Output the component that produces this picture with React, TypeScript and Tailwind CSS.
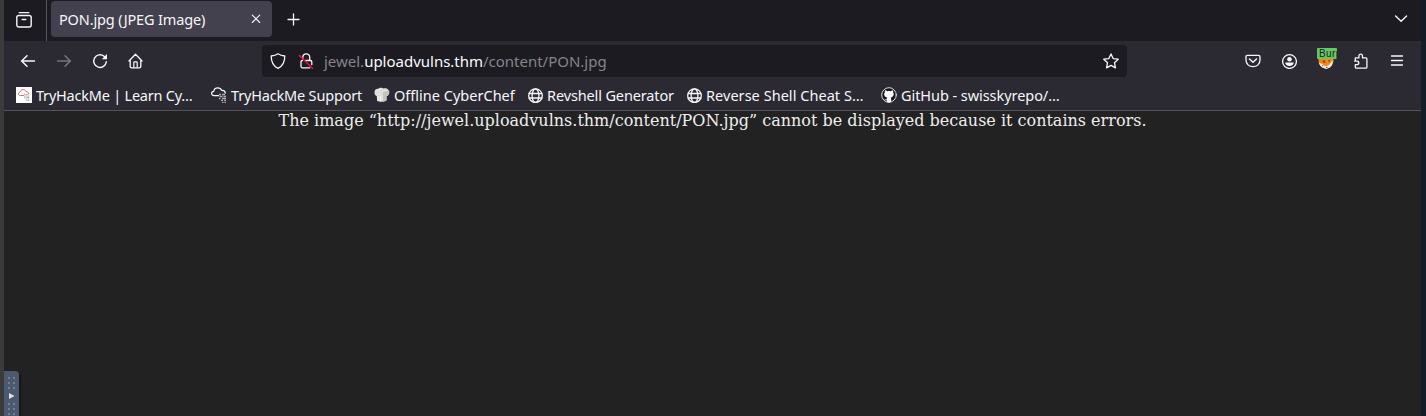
import type { ReactNode } from "react";

function Icon({ children, className = "size-4" }: { children: ReactNode; className?: string }) {
  return (
    <svg
      viewBox="0 0 16 16"
      className={`shrink-0 ${className}`}
      fill="none"
      stroke="currentColor"
      strokeWidth="1.3"
      strokeLinecap="round"
      strokeLinejoin="round"
      aria-hidden="true"
    >
      {children}
    </svg>
  );
}

function GlobeIcon() {
  return (
    <Icon>
      <circle cx="8.5" cy="8.7" r="6.8" />
      <ellipse cx="8.5" cy="8.7" rx="3.4" ry="6.8" />
      <path d="M2.2 6.5h12.6M2.2 11h12.6" />
    </Icon>
  );
}

function CloudIcon({ digits, className = "size-4" }: { digits: string; className?: string }) {
  return (
    <Icon className={className}>
      <path
        strokeWidth="1.2"
        d="M7.5 8.7H3.1C1.6 8.7.6 7.7.6 6.500s.9-2 2.100-2.100C3 2.200 4.700.8 6.800.8c1.800 0 3.200 1 3.800 2.500 1.900-.1 3.600 1 3.700 2.800"
      />
      <path
        stroke={digits}
        strokeWidth="1.3"
        strokeLinecap="butt"
        d="M8 7.500h2m1 0h3M8.500 9.500h3m1 0h2.500M8 11.500h1.500m1.500 0h4M10 13.400h2m1 0h2M11 15.300h1.500m1 0H15"
      />
    </Icon>
  );
}

function ChefHat() {
  return (
    <Icon>
      <path
        fill="#dededb"
        stroke="none"
        d="M2.800 9.200C1 8.600.3 7 .5 5 .8 2.800 2.200 1.600 4 1.900 5.200.6 8.200.3 9.500 1.400c2-.7 4.200 0 4.700 1.400 1.500 1 1.700 4 0 5.400-.5.600-1.100.8-1.700.9v4.400c-2.400 1.500-6.800 1.700-9.300.6z"
      />
      <path fill="#c4c4c0" stroke="none" d="M9 5l5.500-1.500c1 2 .3 4.500-2 5.600v4.400L9 14.700z" />
      <path stroke="#f7f7f5" strokeWidth="1" d="M4 2.800L6 2M4 9.500v4m2.500-4v4.500" />
    </Icon>
  );
}

function GitHubIcon() {
  return (
    <Icon>
      <circle cx="8" cy="8" r="7.3" fill="#17181b" strokeWidth="1" stroke="#dadadd" />
      <path
        fill="#fbfbfe"
        stroke="none"
        d="M4 3.300c.9 0 1.700.4 2.300.9 1.100-.3 2.300-.3 3.400 0 .7-.5 1.400-.9 2.300-.9.3.8.3 1.500.1 2 1.300 2 .5 4.700-2.400 5.200.4.500.5 1 .5 1.600V15c-1.300.5-3 .5-4.400 0v-1.700c-1.500.3-2-.6-2.600-1.500 1 0 1.200 1 2.400.8 0-.9.1-1.500.6-2.100C3.400 10.100 2.400 7.500 3.900 5.300c-.2-.6-.2-1.300.1-2z"
      />
    </Icon>
  );
}

const bookmarks = [
  {
    label: "TryHackMe | Learn Cy…",
    width: "w-[195px]",
    text: "tracking-[-0.22px]",
    icon: (
      <span className="flex size-4 shrink-0 items-center justify-center bg-white text-[#d65a60]">
        <CloudIcon digits="#a5a5a8" className="size-3" />
      </span>
    ),
  },
  { label: "TryHackMe Support", width: "w-[163px]", text: "tracking-[-0.18px]", icon: <CloudIcon digits="#aaaaaf" /> },
  { label: "Offline CyberChef", width: "w-[153px]", text: "tracking-[0.01px]", icon: <ChefHat /> },
  { label: "Revshell Generator", width: "w-[159px]", text: "tracking-[-0.13px]", icon: <GlobeIcon /> },
  { label: "Reverse Shell Cheat S…", width: "w-[195px]", text: "tracking-[0.04px]", icon: <GlobeIcon /> },
  { label: "GitHub - swisskyrepo/…", width: "w-[190px]", text: "tracking-[-0.06px]", icon: <GitHubIcon /> },
];

function TabStrip() {
  return (
    <div className="flex h-[41px] shrink-0 items-start bg-[#1c1b22]">
      <div className="flex h-[41px] w-[43px] items-center border-r border-[#56555e] pb-0.5 pl-3">
        <Icon>
          <path d="M3.2.7h9.6" strokeWidth="1.3" />
          <rect x=".8" y="3.5" width="14.4" height="11.5" rx="2" strokeWidth="1.4" />
          <path d="M6.3 7.500h3.400" strokeWidth="1.6" />
        </Icon>
      </div>
      <div className="mt-px ml-1 flex h-9 w-[221px] items-center justify-between rounded bg-[#42414d] pr-2 pl-2">
        <span className="pt-px text-[14.5px] tracking-[-0.15px]">PON.jpg (JPEG Image)</span>
        <Icon>
          <path d="M4.300 4.100l7.400 7.400M11.700 4.100l-7.400 7.400" strokeWidth="1.1" />
        </Icon>
      </div>
      <button className="mt-3 ml-3.5" aria-label="New tab">
        <Icon>
          <path d="M7.500 2v11M2 7.500h11" />
        </Icon>
      </button>
      <button className="mt-2.5 mr-3 ml-auto" aria-label="List all tabs">
        <Icon>
          <path d="M2.600 6l5.500 5.300L13.600 6" strokeWidth="1.4" />
        </Icon>
      </button>
    </div>
  );
}

function AddressBar() {
  return (
    <div className="ml-[118px] flex h-8 w-[865px] items-center rounded bg-[#1c1b22] pr-2 pl-2">
      <Icon>
        <path d="M8 .8c2 1.500 4.200 2 6.800 2.200 0 6-1.600 10-6.800 12.300C2.800 13 1.200 9 1.200 3 3.800 2.800 6 2.300 8 .8z" />
      </Icon>
      <Icon className="ml-3 size-4">
        <path d="M4.800 6V4.300C4.800 2.200 6.200.8 8.200.8s3.500 1.400 3.500 3.500V7" />
        <path d="M7.500 7.500h5c.8 0 1.300.5 1.300 1.300v2.700M4.500 7.500c-.9 0-1.500.5-1.500 1.300v4.700c0 .8.5 1.300 1.300 1.300h7.500" />
        <path d="M1.500 2.600l13 12.600" stroke="#f20b45" strokeWidth="1.5" />
      </Icon>
      <span className="ml-2.5 text-[15px] tracking-[-0.01px] text-[#85848a]">
        jewel.<span className="text-[#fbfbfe]">uploadvulns.thm</span>/content/PON.jpg
      </span>
      <Icon className="ml-auto size-4">
        <path d="M8 .9l2.150 4.700 5.100.6-3.800 3.500 1 5.200L8 12.400l-4.450 2.500 1-5.200L.75 6.200l5.100-.6z" />
      </Icon>
    </div>
  );
}

function ProxyFox() {
  return (
    <div className="relative mb-1 ml-5 h-[22px] w-5">
      <svg viewBox="0 0 16 16" className="absolute top-[5px] left-px size-4" aria-hidden="true">
        <path d="M.5 4L3 3h10l2.500 2c.5 4-1 7.500-3.500 9.500L8 16l-4-1.500C1 12 0 8 .5 4z" fill="#f08a13" />
        <path d="M1 9.500l3 1.500 3 2 4-1 3.800-5c0 4-1 6-3 7.500L8 16l-4.500-2C2 12.500 1 11 1 9.500z" fill="#e8e9eb" />
        <path d="M4.500 7.500h2l1 2.500-2-.5zM10 7.500l2-.5-1 2.500z" fill="#7e3710" />
        <path d="M3.500 12l2 .5-1 1zM8 14h1.500v1H8z" fill="#727781" />
        <path d="M5.500 11.500l6-1.500-3 3.500z" fill="#f58b0d" />
      </svg>
      <span className="absolute top-0 left-0 h-[11px] w-5 overflow-hidden rounded-[1px] bg-[#66c665] pl-[2px] font-['Liberation_Sans',sans-serif] text-[10px] leading-[11px] tracking-[0.4px] text-[#152b17]">
        Burp
      </span>
    </div>
  );
}

function NavBar() {
  return (
    <div className="flex h-10 items-center pl-4">
      <Icon>
        <path d="M1.500 8H14.500M7 2.800L1.700 8 7 13.200" strokeWidth="1.5" />
      </Icon>
      <Icon className="ml-5 size-4 text-[#76757c]">
        <path d="M1.500 8H14.500M9 2.800L14.300 8 9 13.200" strokeWidth="1.5" />
      </Icon>
      <Icon className="ml-5 size-4">
        <path d="M14.300 8.800A6.300 6.300 0 1 1 12 3.200L13.400 4.500" strokeWidth="1.4" />
        <path d="M15 1v5.200H9.800z" fill="currentColor" stroke="none" />
      </Icon>
      <Icon className="ml-5 size-4">
        <path d="M1 8L7.500 1.200 14 8M2.200 7v6.400c0 .9.500 1.400 1.400 1.400h7.800c.9 0 1.400-.5 1.400-1.400V7" />
        <path d="M5.800 14.500V9.700c0-.5.300-.8.800-.8h1.800c.5 0 .8.300.8.800v4.800" strokeWidth="1.2" />
      </Icon>
      <AddressBar />
      <div className="ml-auto flex items-center pr-4">
        <Icon>
          <path d="M2.300 2.400h11.400c.8 0 1.300.5 1.300 1.300V7c0 4-3 6.700-7 6.700S1 11 1 7V3.700c0-.8.500-1.300 1.300-1.300z" />
          <path d="M4.500 6l3.500 3.300L11.500 6" strokeWidth="1.5" />
        </Icon>
        <Icon className="ml-5 size-4">
          <circle cx="8.500" cy="8.500" r="6.900" />
          <circle cx="8.500" cy="6.200" r="2.300" fill="currentColor" stroke="none" />
          <path d="M4.300 9.500h8.400c0 2.200-1.700 3.500-4.200 3.500s-4.200-1.300-4.200-3.500z" fill="currentColor" stroke="none" />
        </Icon>
        <ProxyFox />
        <Icon className="ml-4 size-4">
          <path d="M2.300 7.500V4.900h3.600V3c0-1.200.8-1.900 1.800-1.900s1.800.7 1.800 1.900v1.900h3.400c.6 0 1 .4 1 1v8.300c0 .6-.4 1-1 1H3.300c-.6 0-1-.4-1-1v-2.500h1.500c1.300 0 2-.7 2-1.800s-.7-1.800-2-1.800H1.500" />
        </Icon>
        <Icon className="ml-5 size-4">
          <path d="M2.500 3h11M2.500 7.500h11M2.500 12h11" />
        </Icon>
      </div>
    </div>
  );
}

export default function App() {
  return (
    <div className="flex h-[416px] w-full overflow-hidden bg-[#222222] font-['Noto_Sans',sans-serif] text-[#f7f7fa]">
      <div className="w-1 shrink-0 bg-[#3b3b3b]" />
      <div className="relative flex min-w-0 grow flex-col">
        <TabStrip />
        <div className="h-[70px] shrink-0 border-b border-[#54535c] bg-[#2b2a33]">
          <NavBar />
          <div className="flex h-[29px] items-center pb-px pl-3">
            {bookmarks.map((item) => (
              <div key={item.label} className={`flex shrink-0 items-center gap-1 ${item.width}`}>
                {item.icon}
                <span className={`whitespace-nowrap text-[14.5px] leading-5 ${item.text}`}>{item.label}</span>
              </div>
            ))}
          </div>
        </div>
        <main className="grow bg-[#222222] text-center font-['DejaVu_Serif',serif] text-[16px] leading-[19px] text-[#eeeeee]">
          The image “http://jewel.uploadvulns.thm/content/PON.jpg” cannot be displayed because it contains errors.
        </main>
        <div className="absolute bottom-0 left-0 h-[45px] w-[15px] rounded-tr bg-[#4b5a6f] shadow-[2px_2px_1px_#171719]">
          <svg viewBox="0 0 15 45" className="h-[45px] w-[15px]" aria-hidden="true">
            <path
              d="M4 7h2m3 0h2M4 12h2m3 0h2M4 17h2m3 0h2M4 33h2m3 0h2M4 38h2m3 0h2M4 43h2m3 0h2"
              stroke="#718096"
              strokeWidth="2"
            />
            <path d="M5 22l5.500 3L5 28z" fill="#e2e2e2" />
          </svg>
        </div>
      </div>
      <div className="w-[5px] shrink-0 bg-[#131d27]" />
    </div>
  );
}
